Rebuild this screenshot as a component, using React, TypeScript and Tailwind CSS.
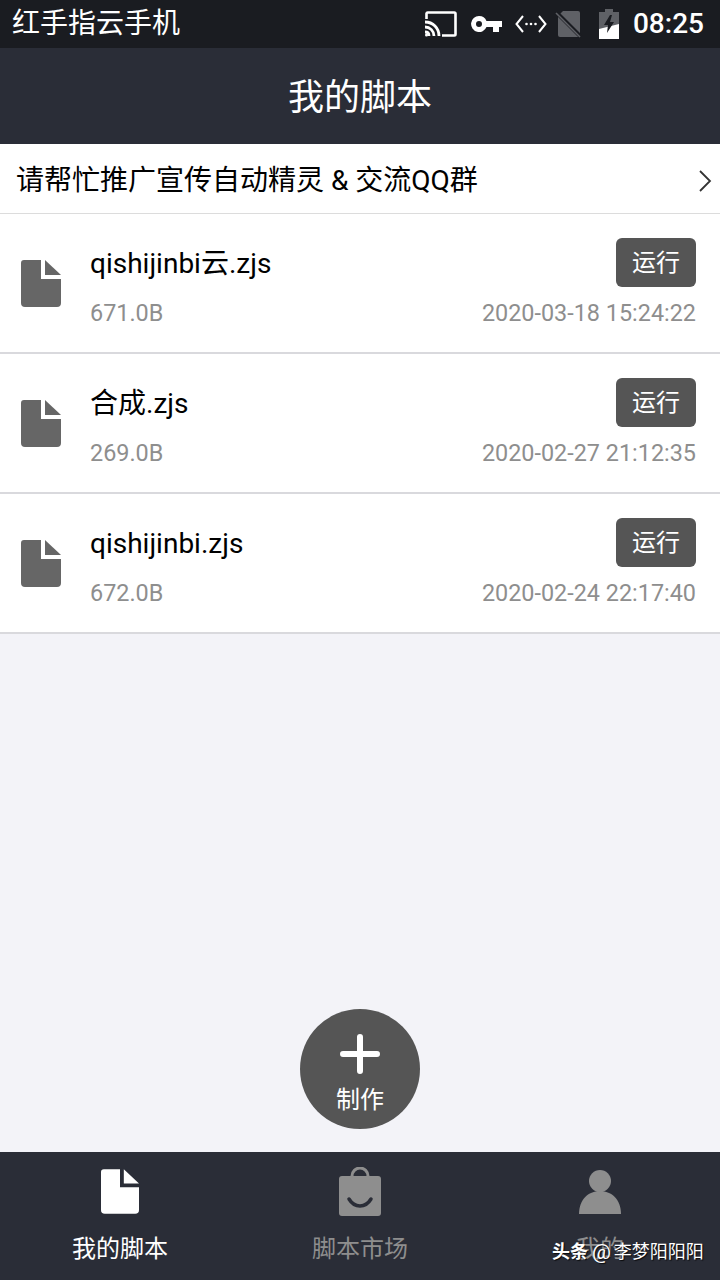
const FileIcon = ({ className }: { className: string }) => (
  <svg viewBox="0 0 40 47" className={className}>
    <path d="M3 0H20V19H40V43a4 4 0 0 1-4 4H4a4 4 0 0 1-4-4V3a3 3 0 0 1 3-3Z" fill="currentColor" />
    <path d="M24 0L40 15H24Z" fill="currentColor" />
  </svg>
);

const scripts = [
  { name: 'qishijinbi云.zjs', size: '671.0B', time: '2020-03-18 15:24:22' },
  { name: '合成.zjs', size: '269.0B', time: '2020-02-27 21:12:35' },
  { name: 'qishijinbi.zjs', size: '672.0B', time: '2020-02-24 22:17:40' },
];

const StatusBar = () => (
  <div className="h-12 bg-[#1a1c21] flex items-center justify-between pl-3 pr-[16px] text-white shrink-0">
    <span className="text-[28px] leading-none">红手指云手机</span>
    <div className="flex items-center">
      {/* cast */}
      <svg width="32" height="26" viewBox="0 0 32 26" className="mr-[13px]">
        <path d="M1.500 8V2.500A1.200 1.200 0 0 1 2.700 1.500h26.600a1.200 1.200 0 0 1 1.200 1.200v20.600a1.200 1.200 0 0 1-1.200 1.200H17" fill="none" stroke="#fff" strokeWidth="2.600" />
        <path d="M0 11c8 0 14 6 14 14M0 16c5 0 9 4 9 9M0 21c2.500 0 4 1.500 4 4" fill="none" stroke="#fff" strokeWidth="2.800" />
        <circle cx="1.500" cy="24" r="1.500" fill="#fff" />
      </svg>
      {/* key */}
      <svg width="32" height="18" viewBox="0 0 32 18" className="mr-[13px]">
        <path d="M9 1a8 8 0 0 1 7.500 5H32v6h-3v5h-6v-5h-6.500A8 8 0 1 1 9 1Zm0 5a3 3 0 1 0 0 6 3 3 0 0 0 0-6Z" fill="#fff" fillRule="evenodd" />
      </svg>
      {/* data activity */}
      <svg width="32" height="20" viewBox="0 0 32 20" className="mr-[8px]">
        <path d="M8 2L1.500 10 8 18M24 2l6.500 8L24 18" fill="none" stroke="#fff" strokeWidth="2" />
        <circle cx="11.500" cy="10" r="1.300" fill="#fff" />
        <circle cx="16" cy="10" r="1.300" fill="#fff" />
        <circle cx="20.500" cy="10" r="1.300" fill="#fff" />
      </svg>
      {/* no sim */}
      <svg width="28" height="28" viewBox="0 0 28 28" className="mr-[16px]">
        <path d="M8 1h15a2 2 0 0 1 2 2v22a2 2 0 0 1-2 2H5a2 2 0 0 1-2-2V6Z" fill="#5f6166" />
        <path d="M2 3l24 24" stroke="#1a1c21" strokeWidth="4" />
        <path d="M1 3l24 24" stroke="#5f6166" strokeWidth="1.600" />
      </svg>
      {/* battery charging */}
      <svg width="20" height="30" viewBox="0 0 20 30" className="mr-[14px]">
        <path d="M6 0h8v3h6v27H0V3h6Z" fill="#5f6166" />
        <path d="M0 20L20 15v15H0Z" fill="#fff" />
        <path d="M11 6L5 16h4l-1 8 7-11h-4l2-7Z" fill="#1a1c21" />
      </svg>
      <span className="text-[28px] leading-none font-medium">08:25</span>
    </div>
  </div>
);

const ScriptRow = ({ name, size, time }: { name: string; size: string; time: string }) => (
  <div className="h-[140px] bg-white border-b-2 border-[#d9d9dd] flex items-center pl-[21px] pr-6">
    <FileIcon className="w-10 h-[47px] text-[#666666] mr-[29px] shrink-0" />
    <div className="flex-1 min-w-0 pt-1">
      <div className="flex items-center justify-between h-[50px]">
        <span className="text-[28px] text-black pt-[2px]">{name}</span>
        <button className="w-20 h-[49px] rounded-md bg-[#555555] text-white text-[24px] leading-none">运行</button>
      </div>
      <div className="flex items-center justify-between text-[23.400px] text-[#8e8e8e] mt-[5px] h-[40px] pt-[2px]">
        <span>{size}</span>
        <span>{time}</span>
      </div>
    </div>
  </div>
);

const App = () => {
  return (
    <div
      className="relative w-[720px] h-[1280px] overflow-hidden flex flex-col bg-[#f3f3f8]"
      style={{ fontFamily: 'Roboto, "Noto Sans CJK SC", sans-serif' }}
    >
      <StatusBar />
      <div className="h-24 bg-[#2a2d37] flex items-center justify-center text-white text-[36px] pt-1 shrink-0">我的脚本</div>

      <div className="h-[70px] bg-white border-b border-[#dcdcdc] flex items-center justify-between pl-4 pr-2 pt-1 shrink-0">
        <span className="text-[28px] text-black">请帮忙推广宣传自动精灵 &amp; 交流QQ群</span>
        <svg width="14" height="22" viewBox="0 0 14 22">
          <path d="M2 1l10 10L2 21" fill="none" stroke="#333" strokeWidth="1.800" />
        </svg>
      </div>

      <div className="flex-1">
        {scripts.map((s) => (
          <ScriptRow key={s.name} {...s} />
        ))}
      </div>

      {/* 制作 floating button */}
      <div className="absolute left-[300px] top-[1009px] w-[120px] h-[120px] rounded-full bg-[#555555] flex flex-col items-center text-white">
        <svg width="40" height="40" viewBox="0 0 40 40" className="mt-[25px]">
          <path d="M20 3v34M3 20h34" stroke="#fff" strokeWidth="6" strokeLinecap="round" />
        </svg>
        <span className="text-[24px] leading-none mt-[14px]">制作</span>
      </div>

      <div className="h-32 bg-[#2a2d37] flex shrink-0">
        <div className="flex-1 flex flex-col items-center pt-[17px] text-white">
          <FileIcon className="w-[38px] h-[45px] text-white" />
          <span className="text-[24px] leading-none mt-[23px]">我的脚本</span>
        </div>
        <div className="flex-1 flex flex-col items-center pt-[15px] text-[#8e8e8e]">
          <svg width="42" height="49" viewBox="0 0 42 49">
            <path d="M13 10V9a8 8 0 0 1 16 0v1" fill="none" stroke="#8e8e8e" strokeWidth="3" />
            <path d="M3 9h36a3 3 0 0 1 3 3v34a3 3 0 0 1-3 3H3a3 3 0 0 1-3-3V12a3 3 0 0 1 3-3Z" fill="#8e8e8e" />
            <path d="M10 32c3 5 7 7 11 7s8-2 11-7" fill="none" stroke="#2a2d37" strokeWidth="3.500" strokeLinecap="round" />
          </svg>
          <span className="text-[24px] leading-none mt-[21px]">脚本市场</span>
        </div>
        <div className="flex-1 flex flex-col items-center pt-[18px] text-[#8e8e8e]">
          <svg width="42" height="44" viewBox="0 0 42 44">
            <circle cx="21" cy="11" r="11" fill="#8e8e8e" />
            <path d="M0 44C0 30 9 21 21 21s21 9 21 23Z" fill="#8e8e8e" />
          </svg>
          <span className="text-[24px] leading-none mt-[23px]">我的</span>
        </div>
      </div>

      {/* watermark */}
      <div
        className="absolute left-[552px] top-[1240px] text-[18px] leading-6 text-white whitespace-nowrap flex items-center"
        style={{ textShadow: '1px 1px 1px rgba(0,0,0,0.8)' }}
      >
        <span className="font-bold">头条</span>
        <span className="text-[21px] leading-6 ml-[4px] mr-[3px]">@</span>
        <span>李梦阳阳阳</span>
      </div>
    </div>
  );
};

export default App;
